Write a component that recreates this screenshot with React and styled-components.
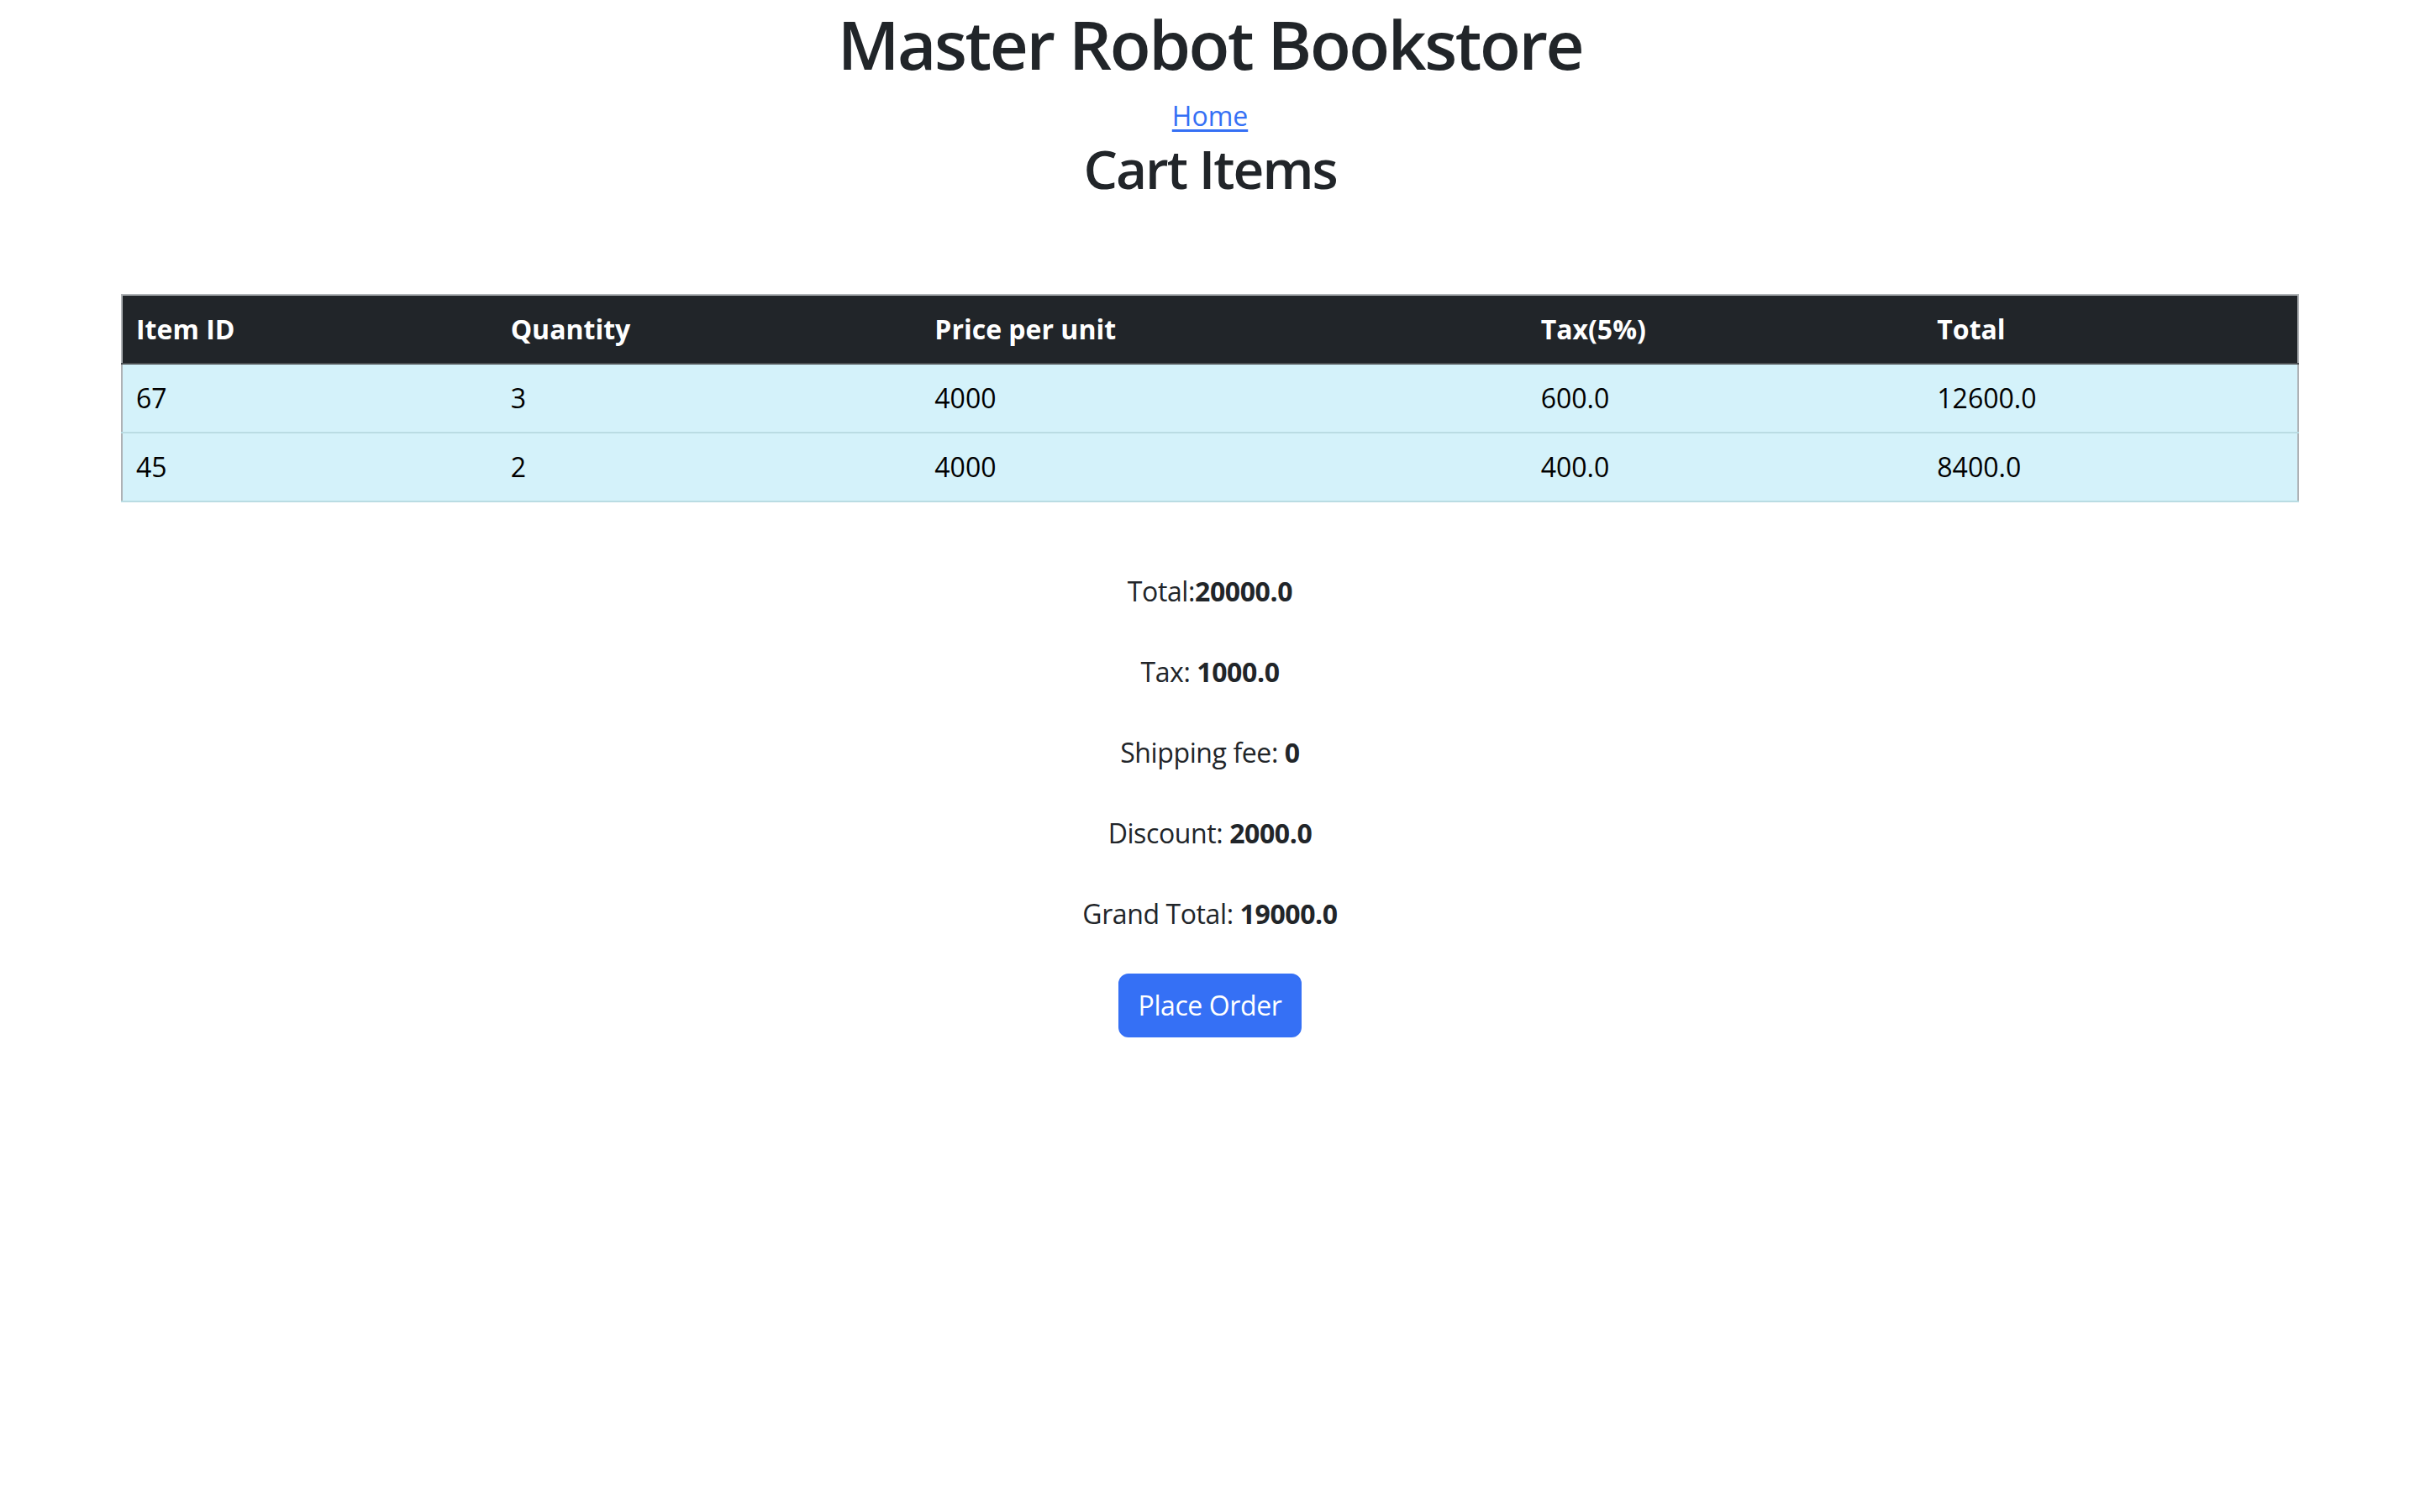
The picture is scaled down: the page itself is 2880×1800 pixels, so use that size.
import React from "react";
import styled, { createGlobalStyle } from "styled-components";

const Global = createGlobalStyle`
  html, body { margin: 0; padding: 0; background: #fff; }
  body {
    font-family: "Open Sans", "Noto Sans", "Liberation Sans", sans-serif;
    color: #212529;
    font-size: 32px;
    line-height: 1.5;
  }
`;

const Page = styled.div`
  display: flex;
  flex-direction: column;
  align-items: center;
  padding-top: 4px;
  padding-bottom: 80px;
`;

const Title = styled.h1`
  margin: 0 0 14px;
  font-size: 80px;
  font-weight: 600;
  line-height: 96px;
  letter-spacing: -2.4px;
  text-align: center;
`;

const HomeLink = styled.a`
  color: #3570f5;
  text-decoration: underline;
  text-underline-offset: 4px;
  font-size: 32px;
  line-height: 48px;
`;

const SubTitle = styled.h2`
  margin: 0;
  font-size: 64px;
  font-weight: 600;
  line-height: 77px;
  letter-spacing: -2px;
`;

const Table = styled.table`
  margin-top: 111px;
  width: 2592px;
  border-collapse: collapse;
  border: 2px solid #aeb2b5;
  font-size: 32px;
  line-height: 48px;
`;

const HeadCell = styled.th`
  background: #212529;
  color: #fff;
  font-weight: 700;
  text-align: left;
  padding: 16px;
  height: 80px;
  box-sizing: border-box;
  border-bottom: 2px solid #4d5154;
`;

const Row = styled.tr`
  background: #d4f2fa;
  border-bottom: 2px solid #badce3;
`;

const Cell = styled.td`
  color: #000;
  padding: 16px;
  height: 80px;
  box-sizing: border-box;
`;

const Summary = styled.div`
  margin-top: 82px;
  display: flex;
  flex-direction: column;
  align-items: center;
  gap: 48px;
`;

const Line = styled.p`
  margin: 0;
  font-size: 32px;
  line-height: 48px;
  letter-spacing: -0.4px;
  text-align: center;
`;

const Strong = styled.b`
  font-weight: 700;
`;

const Button = styled.button`
  margin-top: 47px;
  font-family: inherit;
  font-size: 32px;
  line-height: 48px;
  letter-spacing: -0.4px;
  color: #fff;
  background: #3570f5;
  border: 2px solid #3570f5;
  border-radius: 12px;
  padding: 12px 22px;
  cursor: pointer;
`;

const columns = [
  { label: "Item ID", w: 447 },
  { label: "Quantity", w: 505 },
  { label: "Price per unit", w: 722 },
  { label: "Tax(5%)", w: 472 },
  { label: "Total", w: 446 },
];

const rows = [
  ["67", "3", "4000", "600.0", "12600.0"],
  ["45", "2", "4000", "400.0", "8400.0"],
];

export default function App() {
  return (
    <>
      <Global />
      <Page>
        <Title>Master Robot Bookstore</Title>
        <HomeLink href="#">Home</HomeLink>
        <SubTitle>Cart Items</SubTitle>
        <Table>
          <colgroup>
            {columns.map((c) => (
              <col key={c.label} style={{ width: c.w }} />
            ))}
          </colgroup>
          <thead>
            <tr>
              {columns.map((c) => (
                <HeadCell key={c.label}>{c.label}</HeadCell>
              ))}
            </tr>
          </thead>
          <tbody>
            {rows.map((r, i) => (
              <Row key={i}>
                {r.map((v, j) => (
                  <Cell key={j}>{v}</Cell>
                ))}
              </Row>
            ))}
          </tbody>
        </Table>
        <Summary>
          <Line>
            Total:<Strong>20000.0</Strong>
          </Line>
          <Line>
            Tax: <Strong>1000.0</Strong>
          </Line>
          <Line>
            Shipping fee: <Strong>0</Strong>
          </Line>
          <Line>
            Discount: <Strong>2000.0</Strong>
          </Line>
          <Line>
            Grand Total: <Strong>19000.0</Strong>
          </Line>
        </Summary>
        <Button>Place Order</Button>
      </Page>
    </>
  );
}
